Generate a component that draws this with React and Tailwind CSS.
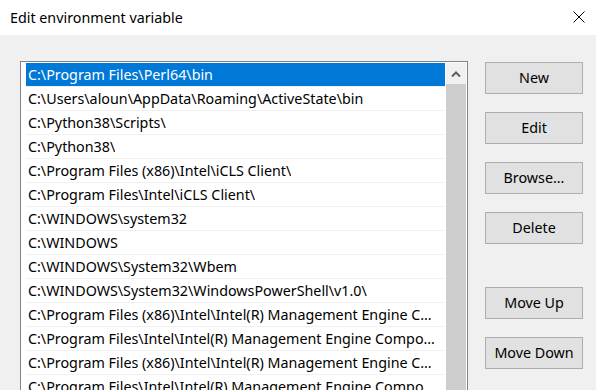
import React from "react";

const paths = [
  "C:\\Program Files\\Perl64\\bin",
  "C:\\Users\\aloun\\AppData\\Roaming\\ActiveState\\bin",
  "C:\\Python38\\Scripts\\",
  "C:\\Python38\\",
  "C:\\Program Files (x86)\\Intel\\iCLS Client\\",
  "C:\\Program Files\\Intel\\iCLS Client\\",
  "C:\\WINDOWS\\system32",
  "C:\\WINDOWS",
  "C:\\WINDOWS\\System32\\Wbem",
  "C:\\WINDOWS\\System32\\WindowsPowerShell\\v1.0\\",
  "C:\\Program Files (x86)\\Intel\\Intel(R) Management Engine Components\\DAL",
  "C:\\Program Files\\Intel\\Intel(R) Management Engine Components\\DAL",
  "C:\\Program Files (x86)\\Intel\\Intel(R) Management Engine Components\\IPT",
  "C:\\Program Files\\Intel\\Intel(R) Management Engine Components\\IPT",
];

const WinButton = ({ children, className = "" }) => (
  <button
    className={`flex h-[32px] w-[98px] items-center justify-center border border-[#adadad] bg-[#e1e1e1] text-[14.3px] text-black ${className}`}
  >
    {children}
  </button>
);

export default function App() {
  return (
    <div
      className="h-[390px] w-[596px] overflow-hidden bg-[#f0f0f0] text-black"
      style={{ fontFamily: '"Noto Sans", "Open Sans", sans-serif' }}
    >
      {/* Title bar */}
      <div className="flex h-[35px] items-center justify-between bg-white pl-[10px] pr-[11px]">
        <span className="text-[14.3px]">Edit environment variable</span>
        <svg width="12" height="12" viewBox="0 0 12 12" className="mb-[1px]">
          <path d="M0.5 0.5 L11.5 11.5 M11.5 0.5 L0.5 11.5" stroke="#000" strokeWidth="1" />
        </svg>
      </div>

      <div className="flex pl-[20px] pt-[26px]">
        {/* List box */}
        <div className="flex h-[340px] w-[448px] border border-[#828282] bg-white pt-[1px]">
          <div className="ml-[5px] flex w-[419px] flex-col">
            {paths.map((p, i) => (
              <div
                key={i}
                className={`flex h-[24px] shrink-0 items-center border-b border-[#f0f0f0] pl-[2px] pr-[6px] pt-[1px] text-[14.3px] ${
                  i === 0 ? "bg-[#0078d7] text-white" : ""
                }`}
              >
                <span className="truncate">{p}</span>
              </div>
            ))}
          </div>
          {/* Scrollbar */}
          <div className="ml-[1px] flex w-[20px] flex-col">
            <div className="flex h-[21px] items-center justify-center bg-[#f0f0f0]">
              <svg width="10" height="6" viewBox="0 0 10 6">
                <path d="M1 5.5 L5 1.5 L9 5.5" fill="none" stroke="#606060" strokeWidth="2" />
              </svg>
            </div>
            <div className="flex-1 bg-[#cdcdcd]" />
          </div>
        </div>

        {/* Buttons */}
        <div className="ml-[17px] flex flex-col pt-[1px]">
          <WinButton>New</WinButton>
          <WinButton className="mt-[18px]">Edit</WinButton>
          <WinButton className="mt-[18px]">Browse...</WinButton>
          <WinButton className="mt-[18px]">Delete</WinButton>
          <WinButton className="mt-[43px]">Move Up</WinButton>
          <WinButton className="mt-[18px]">Move Down</WinButton>
        </div>
      </div>
    </div>
  );
}
